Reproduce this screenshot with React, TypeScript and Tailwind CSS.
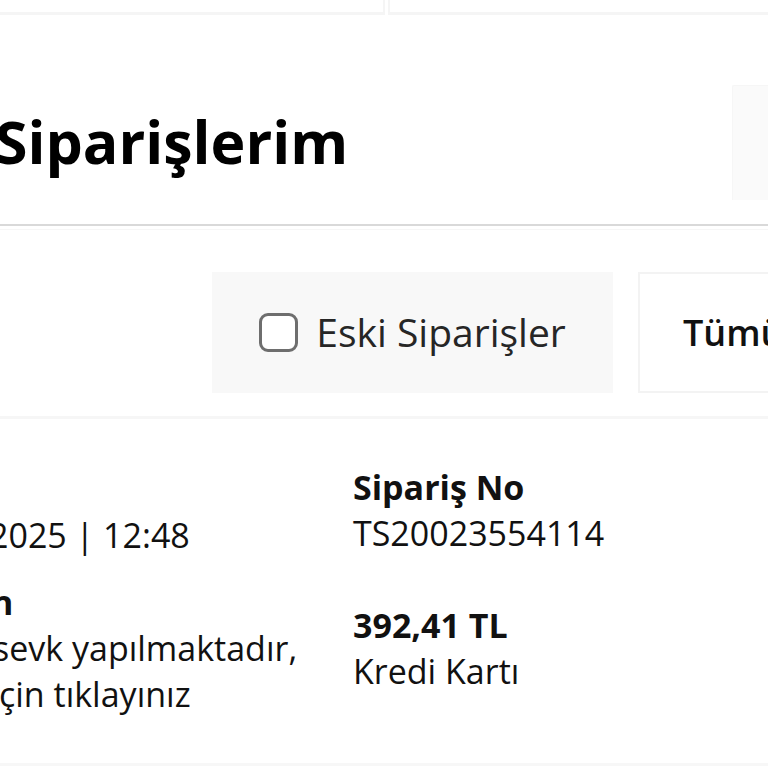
import React from "react";

export default function App() {
  return (
    <div
      className="w-[768px] h-[768px] overflow-hidden bg-white relative"
      style={{ fontFamily: '"Open Sans", "Noto Sans", sans-serif' }}
    >
      {/* top strip: bottoms of two cards */}
      <div className="flex h-[15px] gap-[3px]">
        <div className="w-[385px] h-[15px] bg-white border-b-[3px] border-r-[2px] border-[#f5f5f5]" />
        <div className="flex-1 h-[15px] bg-white border-b-[3px] border-l-[2px] border-[#f5f5f5]" />
      </div>

      {/* header */}
      <div className="h-[209px] pt-[70px]">
        <div className="flex items-center justify-between h-[115px]">
          <h1 className="-ml-[5px] -mt-[3px] text-[59px] leading-none font-bold text-black whitespace-nowrap">
            Siparişlerim
          </h1>
          <div className="w-[36px] h-[115px] bg-[#fafafa] border-l border-t border-[#f6f6f6] rounded-tl-[2px]" />
        </div>
      </div>

      {/* separator */}
      <div className="h-[2px] bg-[#d9d9d9]" />
      <div className="h-[3px] bg-white" />
      <div className="h-[1px] bg-[#f6f6f6]" />

      {/* filters */}
      <div className="flex gap-[25px] pl-[212px] pt-[42px] h-[186px]">
        <div className="w-[401px] h-[121px] shrink-0 bg-[#f8f8f8] flex items-center justify-center gap-[18px]">
          <span className="w-[39px] h-[39px] rounded-[9px] border-[3px] border-[#6e6e6e] bg-white shrink-0" />
          <span className="text-[39px] font-medium text-[#262626] whitespace-nowrap">Eski Siparişler</span>
        </div>
        <div className="w-[300px] h-[121px] shrink-0 bg-white border-2 border-[#f3f3f3] flex items-center pl-[43px]">
          <span className="text-[36px] font-semibold text-[#111] whitespace-nowrap">Tümü</span>
        </div>
      </div>

      {/* separator */}
      <div className="h-[3px] bg-[#f6f6f6]" />

      {/* order card */}
      <div className="flex pt-[45px] h-[344px] text-[34px] leading-[46px] text-[#111]">
        <div className="w-[353px] shrink-0 whitespace-nowrap">
          <div className="h-[46px]" />
          <div className="-ml-[11px] mt-[2px]">2025 | 12:48</div>
          <div className="mt-[21px] -ml-[9px] font-bold">n</div>
          <div className="-ml-[7px]">sevk yapılmaktadır,</div>
          <div className="-ml-[1px]">çin tıklayınız</div>
        </div>
        <div className="flex-1 whitespace-nowrap">
          <div className="font-bold">Sipariş No</div>
          <div>TS20023554114</div>
          <div className="mt-[46px] font-bold">392,41 TL</div>
          <div>Kredi Kartı</div>
        </div>
      </div>

      <div className="h-[3px] bg-[#f7f7f7]" />
    </div>
  );
}
